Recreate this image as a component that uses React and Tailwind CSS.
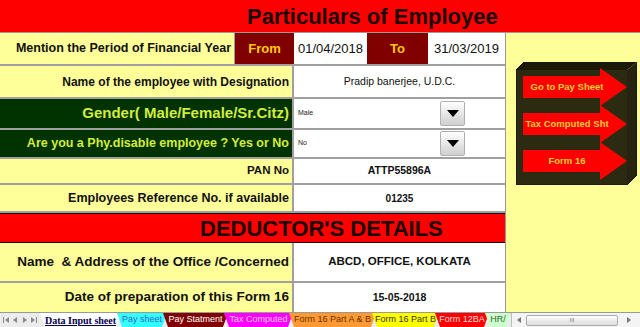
import React from 'react';

const LABEL = 'bg-[#ffff99] text-[#111] font-bold flex items-center justify-end pr-[3px] border-r border-[#a0a0a0] whitespace-nowrap';
const GREEN = 'bg-[#003300] text-[#d4ec3c] font-bold flex items-center justify-end pr-[3px] border-r border-[#a0a0a0] whitespace-nowrap';
const VALUE = 'flex-1 bg-white flex items-center justify-center text-[#111] whitespace-nowrap';
const ROW = 'flex border-b-2 border-[#a0a0a0]';

const TABS = [
  { name: 'Data Input sheet', w: 81, cls: 'bg-white text-[#00004d] font-bold underline font-[Liberation_Serif,serif] text-[10px]' },
  { name: 'Pay sheet', w: 50, cls: 'bg-[#33ffff] text-[#3366cc] text-[9px]' },
  { name: 'Pay Statment', w: 65, cls: 'bg-[#800000] text-white text-[9px]' },
  { name: 'Tax Computed', w: 69, cls: 'bg-[#ff00ff] text-[#ffccff] text-[9px]' },
  { name: 'Form 16 Part A & B', w: 87, cls: 'bg-[#ff9933] text-[#663300] text-[9px]' },
  { name: 'Form 16 Part B', w: 67, cls: 'bg-[#ffff00] text-[#333300] text-[9px]' },
  { name: 'Form 12BA', w: 54, cls: 'bg-[#ff0000] text-[#ffdddd] text-[9px]' },
  { name: 'HR/', w: 26, cls: 'bg-[#ccffcc] text-[#336633] text-[9px]' },
];

function DropCell({ text }) {
  return (
    <div className="flex-1 bg-white border-l border-[#a0a0a0] flex items-center">
      <div className="w-[146px] pl-[4px] text-[7px] text-[#222]">{text}</div>
      <div className="w-[25px] h-[25px] border border-[#b0b0b0] rounded-[2px] bg-gradient-to-b from-white to-[#cfcfcf] flex items-center justify-center">
        <svg width="12" height="7" viewBox="0 0 12 7"><path d="M0 0h12L6 7z" fill="#000" /></svg>
      </div>
    </div>
  );
}

function Arrow({ label }) {
  return (
    <div className="relative w-[104px] h-[38px] -mb-[1px] bg-[#ff0000] [clip-path:polygon(0_8px,77px_8px,77px_0,104px_19px,77px_38px,77px_30px,0_30px)] flex items-center">
      <span className="w-[88px] text-center text-[9.5px] font-bold text-[#ffcc33] whitespace-nowrap">{label}</span>
    </div>
  );
}

export default function App() {
  return (
    <div className="w-[640px] h-[327px] overflow-hidden bg-[#ffff99] font-['Liberation_Sans',Arial,sans-serif] flex flex-col">
      {/* title */}
      <div className="h-[33px] bg-[#ff0000] border-b border-[#999] flex items-center pl-[247px]">
        <span className="text-[22px] font-bold text-[#1a0000] whitespace-nowrap">Particulars of Employee</span>
      </div>

      <div className="flex h-[279px]">
        {/* left sheet */}
        <div className="w-[505px] flex flex-col">
          <div className={`${ROW} h-[33px]`}>
            <div className={`${LABEL} w-[235px] text-[12.5px]`}>Mention the Period of Financial Year</div>
            <div className="w-[59px] bg-[#800000] text-[#ffcc00] font-bold text-[13px] flex items-center justify-center">From</div>
            <div className="w-[73px] bg-white text-[13px] text-[#111] flex items-center justify-center">01/04/2018</div>
            <div className="w-[61px] bg-[#800000] text-[#ffcc00] font-bold text-[13px] flex items-center justify-center">To</div>
            <div className="w-[77px] bg-white text-[13px] text-[#111] flex items-center justify-center">31/03/2019</div>
          </div>

          <div className={`${ROW} h-[33px]`}>
            <div className={`${LABEL} w-[293px] text-[12px]`}>Name of the employee with Designation</div>
            <div className={`${VALUE} border-l border-[#a0a0a0] text-[10.5px]`}>Pradip banerjee, U.D.C.</div>
          </div>

          <div className={`${ROW} h-[31px]`}>
            <div className={`${GREEN} w-[293px] text-[15px]`}>Gender( Male/Female/Sr.Citz)</div>
            <DropCell text="Male" />
          </div>

          <div className={`${ROW} h-[29px]`}>
            <div className={`${GREEN} w-[293px] text-[12.5px]`}>Are you a Phy.disable employee ? Yes or No</div>
            <DropCell text="No" />
          </div>

          <div className={`${ROW} h-[26px]`}>
            <div className={`${LABEL} w-[293px] text-[11.5px]`}>PAN No</div>
            <div className={`${VALUE} border-l border-[#a0a0a0] text-[10.5px] font-bold`}>ATTP55896A</div>
          </div>

          <div className={`${ROW} h-[28px]`}>
            <div className={`${LABEL} w-[293px] text-[12.5px]`}>Employees Reference No. if available</div>
            <div className={`${VALUE} border-l border-[#a0a0a0] text-[10px] font-bold`}>01235</div>
          </div>

          {/* deductor header */}
          <div className="h-[30px] bg-[#ff0000] border-y border-[#111] flex items-center pl-[200px]">
            <span className="text-[22px] font-bold text-[#1a0000] whitespace-nowrap">DEDUCTOR'S DETAILS</span>
          </div>

          <div className={`${ROW} h-[40px]`}>
            <div className={`${LABEL} w-[293px] text-[13.5px]`}>Name&nbsp; &amp; Address of the Office /Concerned</div>
            <div className={`${VALUE} border-l border-[#a0a0a0] text-[11.5px] font-bold`}>ABCD, OFFICE, KOLKATA</div>
          </div>

          <div className="flex h-[29px]">
            <div className={`${LABEL} w-[293px] text-[13.5px]`}>Date of preparation of this Form 16</div>
            <div className={`${VALUE} border-l border-[#a0a0a0] text-[10.5px] font-bold`}>15-05-2018</div>
          </div>
        </div>

        {/* right area with buttons */}
        <div className="flex-1 border-l border-[#999] bg-[#ffff99] pl-[10px] pt-[29px]">
          <div className="relative w-[121px] h-[123px]">
            <svg className="absolute inset-0" width="121" height="123" viewBox="0 0 121 123">
              <polygon points="0,8 8,0 121,0 111,8" fill="#1b1a07" />
              <polygon points="111,8 121,0 121,113 111,123" fill="#262410" />
              <rect x="0" y="8" width="111" height="115" fill="#2c2a10" />
              <polygon points="0,8 8,0 121,0 121,113 111,123 0,123" fill="none" stroke="#111" strokeWidth="1" />
            </svg>
            <div className="relative flex flex-col pl-[7px] pt-[6px]">
              <Arrow label="Go to Pay Sheet" />
              <Arrow label="Tax Computed Sht" />
              <Arrow label="Form 16" />
            </div>
          </div>
        </div>
      </div>

      {/* sheet tabs */}
      <div className="h-[15px] bg-[#ececec] border-t border-[#999] flex items-stretch">
        <div className="w-[40px] flex items-center justify-center">
          <svg width="38" height="8" viewBox="0 0 38 8">
            <rect x="2" y="1" width="1" height="6" fill="#888" />
            <path d="M8 1v6L4 4z" fill="#888" />
            <path d="M16 1v6l-4-3z" fill="#888" />
            <path d="M22 1v6l4-3z" fill="#888" />
            <path d="M30 1v6l4-3z" fill="#888" />
            <rect x="35" y="1" width="1" height="6" fill="#888" />
          </svg>
        </div>
        {TABS.map(t => (
          <div
            key={t.name}
            style={{ width: t.w }}
            className={`${t.cls} -mr-[4px] flex items-center justify-center whitespace-nowrap overflow-hidden [clip-path:polygon(0_0,100%_0,calc(100%-5px)_100%,5px_100%)]`}
          >
            {t.name}
          </div>
        ))}
        <div className="flex-1 ml-[4px] bg-[#f4f4f4] border-l border-[#bbb] flex items-center">
          <div className="w-[14px] flex items-center justify-center">
            <svg width="4" height="6" viewBox="0 0 4 6"><path d="M4 0v6L0 3z" fill="#777" /></svg>
          </div>
          <div className="w-[92px] h-[11px] rounded-[2px] border border-[#aaa] bg-gradient-to-b from-white to-[#dcdcdc] flex items-center justify-center text-[6px] text-[#777] leading-none">III</div>
          <div className="flex-1 flex items-center justify-center">
            <svg width="4" height="6" viewBox="0 0 4 6"><path d="M0 0v6l4-3z" fill="#777" /></svg>
          </div>
        </div>
      </div>
    </div>
  );
}
